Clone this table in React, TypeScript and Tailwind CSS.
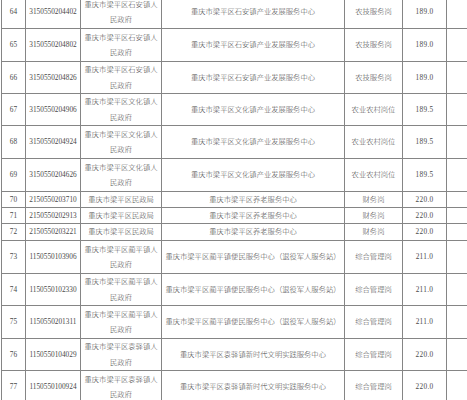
import React from "react";

type Row = {
  no: string;
  id: string;
  unit: string[];
  org: string;
  job: string;
  score: string;
  h: string;
};

const rows: Row[] = [
  { no: "64", id: "3150550204402", unit: ["重庆市梁平区石安镇人", "民政府"], org: "重庆市梁平区石安镇产业发展服务中心", job: "农技服务岗", score: "189.0", h: "h-[33px]" },
  { no: "65", id: "3150550204802", unit: ["重庆市梁平区石安镇人", "民政府"], org: "重庆市梁平区石安镇产业发展服务中心", job: "农技服务岗", score: "189.0", h: "h-[33px]" },
  { no: "66", id: "3150550204826", unit: ["重庆市梁平区石安镇人", "民政府"], org: "重庆市梁平区石安镇产业发展服务中心", job: "农技服务岗", score: "189.0", h: "h-[32px]" },
  { no: "67", id: "3150550204906", unit: ["重庆市梁平区文化镇人", "民政府"], org: "重庆市梁平区文化镇产业发展服务中心", job: "农业农村岗位", score: "189.5", h: "h-[32px]" },
  { no: "68", id: "3150550204924", unit: ["重庆市梁平区文化镇人", "民政府"], org: "重庆市梁平区文化镇产业发展服务中心", job: "农业农村岗位", score: "189.5", h: "h-[33px]" },
  { no: "69", id: "3150550204626", unit: ["重庆市梁平区文化镇人", "民政府"], org: "重庆市梁平区文化镇产业发展服务中心", job: "农业农村岗位", score: "189.5", h: "h-[33px]" },
  { no: "70", id: "2150550203710", unit: ["重庆市梁平区民政局"], org: "重庆市梁平区养老服务中心", job: "财务岗", score: "220.0", h: "h-[16px]" },
  { no: "71", id: "2150550202913", unit: ["重庆市梁平区民政局"], org: "重庆市梁平区养老服务中心", job: "财务岗", score: "220.0", h: "h-[16px]" },
  { no: "72", id: "2150550203221", unit: ["重庆市梁平区民政局"], org: "重庆市梁平区养老服务中心", job: "财务岗", score: "220.0", h: "h-[17px]" },
  { no: "73", id: "1150550103906", unit: ["重庆市梁平区蔺平镇人", "民政府"], org: "重庆市梁平区蔺平镇便民服务中心（退役军人服务站）", job: "综合管理岗", score: "211.0", h: "h-[33px]" },
  { no: "74", id: "1150550102330", unit: ["重庆市梁平区蔺平镇人", "民政府"], org: "重庆市梁平区蔺平镇便民服务中心（退役军人服务站）", job: "综合管理岗", score: "211.0", h: "h-[32px]" },
  { no: "75", id: "1150550201311", unit: ["重庆市梁平区蔺平镇人", "民政府"], org: "重庆市梁平区蔺平镇便民服务中心（退役军人服务站）", job: "综合管理岗", score: "211.0", h: "h-[33px]" },
  { no: "76", id: "1150550104029", unit: ["重庆市梁平区袁驿镇人", "民政府"], org: "重庆市梁平区袁驿镇新时代文明实践服务中心", job: "综合管理岗", score: "220.0", h: "h-[32px]" },
  { no: "77", id: "1150550100924", unit: ["重庆市梁平区袁驿镇人", "民政府"], org: "重庆市梁平区袁驿镇新时代文明实践服务中心", job: "综合管理岗", score: "220.0", h: "h-[33px]" },
];

const cell =
  "flex flex-col items-center justify-center border-l border-[#858585] whitespace-nowrap overflow-hidden";

export default function App() {
  return (
    <div
      className="w-[467px] h-[400px] overflow-hidden bg-white text-[#4a4a4a] pl-[1px]"
      style={{ fontFamily: '"Liberation Serif", "Noto Sans CJK SC", serif' }}
    >
      <div className="mt-[-4px] flex flex-col text-[7.3px] leading-[15.3px] font-light">
        {rows.map((r) => (
          <div
            key={r.no}
            className={`grid grid-cols-[24px_55px_81px_183px_58px_44px_1fr] border-b border-[#858585] ${r.h}`}
          >
            <div className={cell}>{r.no}</div>
            <div className={cell}>{r.id}</div>
            <div className={cell}>
              {r.unit.map((u) => (
                <span key={u}>{u}</span>
              ))}
            </div>
            <div className={cell}>{r.org}</div>
            <div className={cell}>{r.job}</div>
            <div className={`${cell} tracking-[0.3px]`}>{r.score}</div>
            <div className={cell}></div>
          </div>
        ))}
      </div>
    </div>
  );
}
